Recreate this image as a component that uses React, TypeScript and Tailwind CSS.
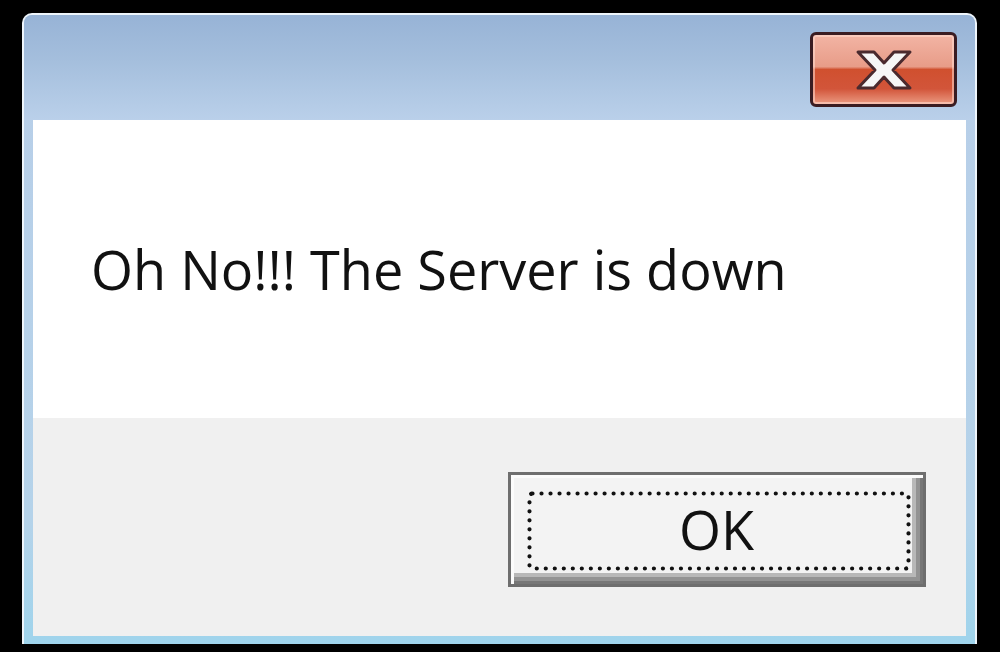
import React from "react";

function CloseButton() {
  return (
    <div className="relative w-[147px] h-[75px] rounded-[6px] border-[3px] border-[#3a1c22] overflow-hidden bg-[linear-gradient(to_bottom,#f2b4a4_0%,#e89c88_46%,#d0502f_50%,#d2553a_78%,#eb9a82_100%)] shadow-[inset_0_0_0_2px_rgba(255,220,210,0.55)] flex items-center justify-center">
      <svg width="66" height="46" viewBox="0 0 66 46">
        <path
          d="M7 5 L23 5 L33 16 L43 5 L59 5 L42 23 L59 41 L43 41 L33 30 L23 41 L7 41 L24 23 Z"
          fill="#f6f6f6"
          stroke="#4a2a2e"
          strokeWidth="3"
          strokeLinejoin="round"
        />
      </svg>
    </div>
  );
}

export default function App() {
  return (
    <div className="w-[1000px] h-[652px] bg-black pt-[13px] pl-[22px]" style={{ fontFamily: '"Open Sans", "Noto Sans", sans-serif' }}>
      <div className="w-[955px] h-[631px] rounded-t-[10px] border-2 border-b-0 border-[#eef5fb] bg-[linear-gradient(to_bottom,#b8cee8_0%,#b5d3ea_80%,#9fd4ec_100%)] flex flex-col overflow-hidden">
        <div className="h-[105px] flex justify-end items-start pt-[17px] pr-[18px] bg-[linear-gradient(to_bottom,#97b3d6_0%,#a5bfdd_45%,#bad0ea_100%)]">
          <CloseButton />
        </div>
        <div className="flex-1 mx-[9px] mb-[8px] flex flex-col">
          <div className="h-[298px] bg-white flex items-center pl-[58px]">
            <span className="text-[54px] text-[#111] leading-none">Oh No!!! The Server is down</span>
          </div>
          <div className="flex-1 bg-[#f0f0f0] flex justify-end items-start pt-[54px] pr-[40px]">
            <div className="w-[418px] h-[115px] border-[3px] border-[#6e6e6e] bg-[#f3f3f3]">
              <div className="relative w-full h-full border-t-[3px] border-l-[3px] border-[#fbfbfb] shadow-[inset_-3px_-3px_0_#777777,inset_-7px_-7px_0_#939393,inset_-11px_-11px_0_#b8b8b8] flex items-center justify-center">
                <svg className="absolute left-[13px] top-[13px]" width="384" height="80" viewBox="0 0 384 80">
                  <rect
                    x="2.5"
                    y="2.5"
                    width="379"
                    height="75"
                    rx="3"
                    fill="none"
                    stroke="#111"
                    strokeWidth="4.2"
                    strokeLinecap="round"
                    strokeDasharray="0.01 9"
                  />
                </svg>
                <span className="text-[54px] leading-none text-[#111] -mt-[4px] -ml-[4px]">OK</span>
              </div>
            </div>
          </div>
        </div>
      </div>
    </div>
  );
}
